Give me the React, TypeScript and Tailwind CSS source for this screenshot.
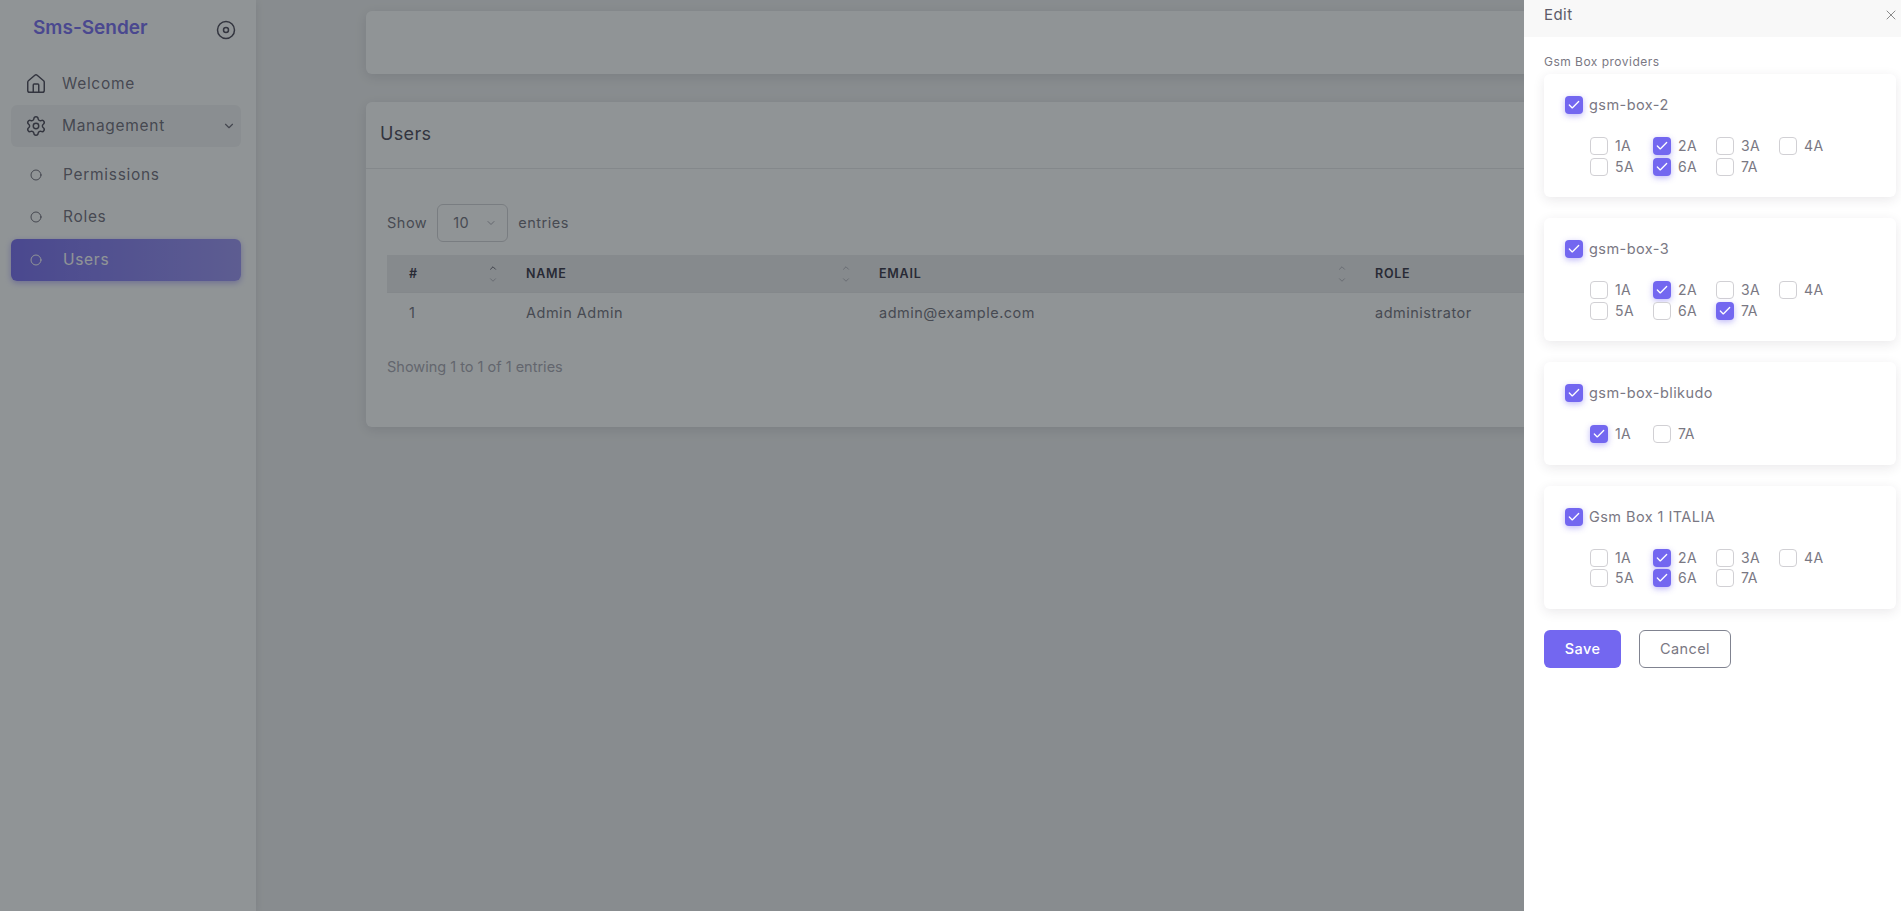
import { Check, ChevronDown, ChevronUp, Circle, House, Settings, X } from 'lucide-react';

const boxes = [
  { name: 'gsm-box-2', ports: [['1A', false], ['2A', true], ['3A', false], ['4A', false], ['5A', false], ['6A', true], ['7A', false]] },
  { name: 'gsm-box-3', ports: [['1A', false], ['2A', true], ['3A', false], ['4A', false], ['5A', false], ['6A', false], ['7A', true]] },
  { name: 'gsm-box-blikudo', ports: [['1A', true], ['7A', false]] },
  { name: 'Gsm Box 1 ITALIA', ports: [['1A', false], ['2A', true], ['3A', false], ['4A', false], ['5A', false], ['6A', true], ['7A', false]] },
] as { name: string; ports: [string, boolean][] }[];

function Checkbox({ checked }: { checked: boolean }) {
  if (checked) {
    return (
      <span className="size-[18px] shrink-0 rounded-[4px] bg-[#7367f0] shadow-[0_2px_6px_rgba(115,103,240,0.45)] flex items-center justify-center">
        <Check className="size-3.5 text-white" strokeWidth={2.25} />
      </span>
    );
  }
  return <span className="size-[18px] shrink-0 rounded-[4px] border border-[#d1d0d4] bg-white" />;
}

function SortArrows({ active }: { active?: boolean }) {
  return (
    <span className="flex flex-col items-center">
      <ChevronUp className={active ? 'size-2.5 -mb-px text-[#444050]' : 'size-2.5 -mb-px text-[#a5a3ae]'} />
      <ChevronDown className="size-2.5 mt-[3px] text-[#a5a3ae]" />
    </span>
  );
}

function SubItem({ label }: { label: string }) {
  return (
    <div className="h-[42px] pl-[19px] flex items-center gap-[21px] text-[#444050]/80">
      <Circle className="size-3" />
      <span>{label}</span>
    </div>
  );
}

function Sidebar() {
  return (
    <aside className="w-64 shrink-0 bg-white pl-[11px] pr-[15px] min-h-[911px] shadow-[0_2px_8px_rgba(47,43,61,0.12)] tracking-[0.045em] text-[15.5px]">
      <div className="h-[62px] pl-[22px] pr-[5px] flex items-center justify-between">
        <span className="text-[19px] font-semibold text-[#7367f0] tracking-normal -mt-[6px]">Sms-Sender</span>
        <svg viewBox="0 0 20 20" className="size-5 -mt-[2px] text-[#444050]" fill="none" stroke="currentColor" strokeWidth="1.5">
          <circle cx="10" cy="10" r="8.5" />
          <circle cx="10" cy="10" r="2.5" />
        </svg>
      </div>
      <div className="h-[43px] pl-[14px] flex items-center gap-[15px] text-[#444050]/80">
        <House className="size-[22px] text-[#444050]" strokeWidth={1.6} />
        <span>Welcome</span>
      </div>
      <div className="h-[42px] pl-[14px] pr-[5px] rounded-md bg-[#2f2b3d]/[0.06] flex items-center gap-[15px] text-[#444050]/80">
        <Settings className="size-[22px] text-[#444050]" strokeWidth={1.6} />
        <span className="flex-1">Management</span>
        <ChevronDown className="size-3.5" />
      </div>
      <div className="mt-[7px]">
        <SubItem label="Permissions" />
        <SubItem label="Roles" />
        <div className="mt-px h-[42px] pl-[19px] flex items-center gap-[21px] rounded-md text-white bg-gradient-to-r from-[#7367f0] to-[#9990f5] shadow-[0_2px_6px_rgba(115,103,240,0.5)]">
          <Circle className="size-3" />
          <span>Users</span>
        </div>
      </div>
    </aside>
  );
}

function UsersTable() {
  return (
    <div className="mt-[28px] h-[325px] rounded-md bg-white shadow-[0_3px_12px_rgba(47,43,61,0.14)] text-[#6d6b77]">
      <div className="h-[67px] pl-[14px] pb-1 border-b border-[#e6e6e8] flex items-center text-[18px] tracking-[0.02em] text-[#444050]">Users</div>
      <div className="pt-[35px] px-[21px] text-[14.5px] tracking-[0.035em]">
        <div className="flex items-center gap-[10px]">
          <span>Show</span>
          <div className="w-[71px] h-[38px] rounded-md border border-[#d1d0d4] pl-[15px] pr-[10px] flex items-center justify-between">
            <span>10</span>
            <ChevronDown className="size-3 text-[#a5a3ae]" />
          </div>
          <span>entries</span>
        </div>
        <div className="mt-[13px] h-[38px] pt-px bg-[#eaeaec] grid grid-cols-[139px_353px_496px_1fr] items-center text-[12.5px] font-semibold tracking-[0.06em] text-[#2f2b3d] border-b border-[#e6e6e8]">
          <div className="pl-[22px] pr-[28px] flex items-center justify-between"><span>#</span><SortArrows active /></div>
          <div className="pr-[28px] flex items-center justify-between"><span>NAME</span><SortArrows /></div>
          <div className="pr-[28px] flex items-center justify-between"><span>EMAIL</span><SortArrows /></div>
          <div>ROLE</div>
        </div>
        <div className="h-[39px] grid grid-cols-[139px_353px_496px_1fr] items-center">
          <div className="pl-[22px]">1</div>
          <div>Admin Admin</div>
          <div>admin@example.com</div>
          <div>administrator</div>
        </div>
        <div className="mt-[24px] tracking-normal text-[#a5a3ae]">Showing 1 to 1 of 1 entries</div>
      </div>
    </div>
  );
}

function BoxCard({ name, ports }: { name: string; ports: [string, boolean][] }) {
  return (
    <div className="rounded-md bg-white pl-[21px] pt-[22px] pb-[21.5px] shadow-[0_3px_12px_rgba(47,43,61,0.1)]">
      <label className="flex items-center gap-[6px] text-[14.5px] leading-[18px] tracking-[0.03em]">
        <Checkbox checked />
        <span>{name}</span>
      </label>
      <div className="mt-[23px] pl-[25px] grid grid-cols-[repeat(4,63px)] gap-y-[2.5px]">
        {ports.map(([port, checked]) => (
          <label key={port} className="h-[18px] flex items-center gap-[7px] text-[14px] leading-[18px] tracking-[0.03em]">
            <Checkbox checked={checked} />
            <span>{port}</span>
          </label>
        ))}
      </div>
    </div>
  );
}

function EditPanel() {
  return (
    <div className="absolute top-0 right-0 bottom-0 w-[377px] bg-white text-[#7a7883]">
      <div className="h-[37px] pl-[20px] pr-[2px] bg-[#f8f8f8] flex items-center justify-between">
        <span className="-mt-[6px] text-[15px] tracking-[0.03em] text-[#5d5b68]">Edit</span>
        <X className="-mt-[8px] size-4 text-[#8a8a8a]" strokeWidth={1.5} />
      </div>
      <div className="pl-[20px] pr-[5px]">
        <div className="h-[37px] pt-[17px] text-[12px] leading-[16px] tracking-[0.04em]">Gsm Box providers</div>
        <div className="flex flex-col gap-[21px]">
          {boxes.map((box) => (
            <BoxCard key={box.name} name={box.name} ports={box.ports} />
          ))}
        </div>
        <div className="mt-[21px] flex gap-[18px] text-[14.5px] tracking-[0.03em]">
          <button type="button" className="w-[77px] h-[38px] rounded-md bg-[#7367f0] text-white font-medium">Save</button>
          <button type="button" className="w-[92px] h-[38px] rounded-md border border-[#808390]">Cancel</button>
        </div>
      </div>
    </div>
  );
}

export default function App() {
  return (
    <div className="relative h-[911px] overflow-hidden flex bg-[#efeff0] font-['Inter',sans-serif]">
      <Sidebar />
      <main className="flex-1 pl-[110px] pr-6 pt-[11px]">
        <div className="h-[63px] rounded-md bg-white shadow-[0_3px_12px_rgba(47,43,61,0.14)]" />
        <UsersTable />
      </main>
      <div className="absolute inset-0 bg-[#21292d]/50" />
      <EditPanel />
    </div>
  );
}
